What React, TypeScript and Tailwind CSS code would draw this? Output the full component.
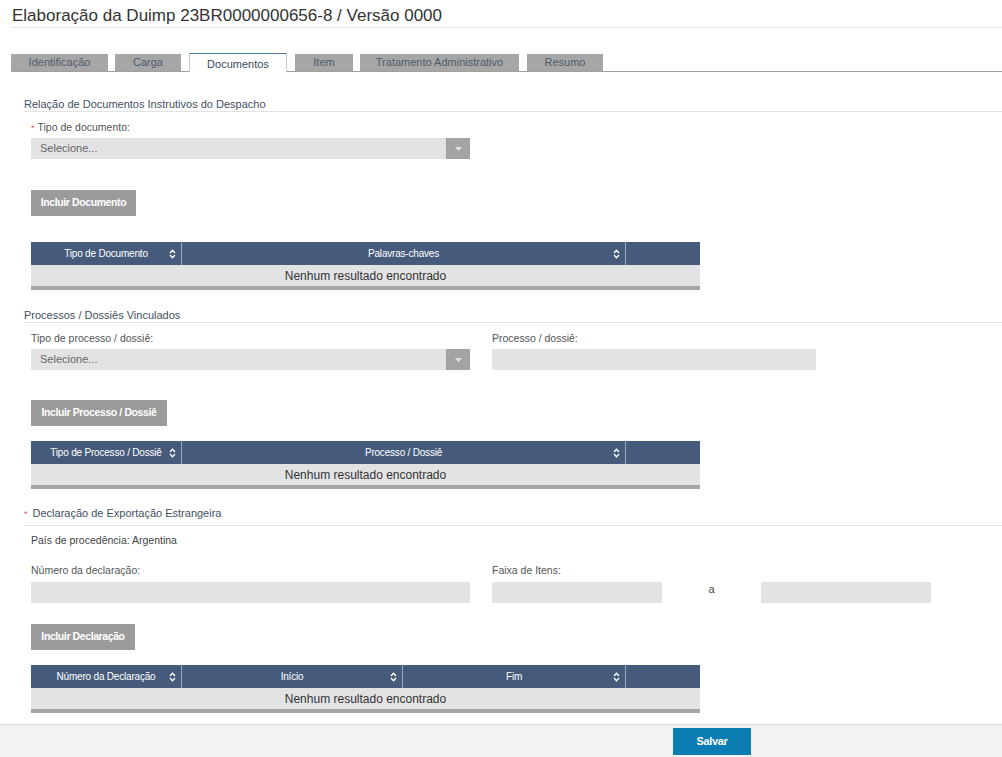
import React from 'react';

const SortIcon = () => (
  <svg width="7" height="10" viewBox="0 0 7 10" className="absolute right-[5px] top-[7px]">
    <path d="M1 4 L3.5 1.2 L6 4 M1 6 L3.5 8.8 L6 6" fill="none" stroke="#ffffff" strokeWidth="1.3" />
  </svg>
);

type Col = { label: string; width: number; sort: boolean };

const ResultTable = ({ cols }: { cols: Col[] }) => (
  <div className="ml-[31px] w-[669px]">
    <div className="flex h-[23px] bg-[#465b7b]">
      {cols.map((c, i) => (
        <div
          key={i}
          className={`relative flex items-center justify-center text-[10px] tracking-[-0.2px] text-white ${i > 0 ? 'border-l border-[#9aabc0]' : ''}`}
          style={{ width: c.width }}
        >
          {c.label}
          {c.sort && <SortIcon />}
        </div>
      ))}
    </div>
    <div className="flex h-[25px] items-center justify-center border-b-4 border-[#a6a6a6] bg-[#e2e3e4] text-[12px] text-[#333]">
      Nenhum resultado encontrado
    </div>
  </div>
);

const SectionTitle = ({ children, className }: { children: React.ReactNode; className: string }) => (
  <div className={`ml-[24px] border-b border-[#e3e3e3] text-[11px] leading-[14px] text-[#3f5062] ${className}`}>
    {children}
  </div>
);

const Label = ({ children, required }: { children: React.ReactNode; required?: boolean }) => (
  <div className="h-[13px] text-[10.5px] leading-[13px] text-[#555]">
    {required && <span className="mr-[3px] text-[9px] text-[#d9534f]">*</span>}
    {children}
  </div>
);

const Select = () => (
  <div className="flex h-[21px] w-[439px] bg-[#e2e3e4]">
    <div className="flex flex-1 items-center pl-[9px] text-[11px] text-[#666]">Selecione...</div>
    <div className="flex w-[24px] items-center justify-center bg-[#a3a3a3]">
      <svg width="7" height="4" viewBox="0 0 7 4">
        <path d="M0 0 L7 0 L3.5 4 Z" fill="#e4e4e4" />
      </svg>
    </div>
  </div>
);

const GrayButton = ({ children, width, className }: { children: React.ReactNode; width: string; className: string }) => (
  <div
    className={`ml-[31px] flex h-[26px] items-center justify-center bg-[#9b9b9b] text-[10.5px] font-bold tracking-[-0.4px] text-white ${width} ${className}`}
  >
    {children}
  </div>
);

const tabs = [
  { label: 'Identificação', w: 'w-[97px]', ml: 'ml-0' },
  { label: 'Carga', w: 'w-[66px]', ml: 'ml-[7px]' },
  { label: 'Documentos', w: 'w-[98px]', ml: 'ml-[8px]', active: true },
  { label: 'Item', w: 'w-[58px]', ml: 'ml-[8px]' },
  { label: 'Tratamento Administrativo', w: 'w-[159px]', ml: 'ml-[7px]' },
  { label: 'Resumo', w: 'w-[76px]', ml: 'ml-[8px]' },
];

export default function App() {
  return (
    <div className="flex h-[757px] w-full flex-col overflow-hidden bg-white font-['Liberation_Sans',Arial,sans-serif]">
      <div className="flex-1">
        {/* Title */}
        <div className="ml-[11px] border-b border-[#e5e5e5] pb-[1px] pl-[1px] pt-[6px] text-[17px] leading-[20px] text-[#333]">
          Elaboração da Duimp 23BR0000000656-8 / Versão 0000
        </div>

        {/* Tabs */}
        <div className="ml-[11px] mt-[25px] flex h-[19px] items-end border-b border-[#a0a0a0]">
          {tabs.map((t) =>
            t.active ? (
              <div
                key={t.label}
                className={`${t.w} ${t.ml} -mb-px h-[19px] border border-b-0 border-[#c3cad1] border-t-[#4f7898] bg-white pt-[3px] text-center text-[11px] leading-[14px] text-[#3b4b5b]`}
              >
                {t.label}
              </div>
            ) : (
              <div
                key={t.label}
                className={`${t.w} ${t.ml} h-[17px] bg-[#a6a6a6] text-center text-[11px] leading-[17px] text-[#4d5c6c]`}
              >
                {t.label}
              </div>
            )
          )}
        </div>

        {/* Documentos */}
        <SectionTitle className="mt-[25px]">Relação de Documentos Instrutivos do Despacho</SectionTitle>
        <div className="ml-[31px] mt-[9px]">
          <Label required>Tipo de documento:</Label>
          <div className="mt-[4px]">
            <Select />
          </div>
        </div>
        <GrayButton width="w-[105px]" className="mt-[31px]">Incluir Documento</GrayButton>
        <div className="mt-[26px]">
          <ResultTable
            cols={[
              { label: 'Tipo de Documento', width: 150, sort: true },
              { label: 'Palavras-chaves', width: 444, sort: true },
              { label: '', width: 75, sort: false },
            ]}
          />
        </div>

        {/* Processos */}
        <SectionTitle className="mt-[18px]">Processos / Dossiês Vinculados</SectionTitle>
        <div className="ml-[31px] mt-[9px] flex gap-[22px]">
          <div>
            <Label>Tipo de processo / dossiê:</Label>
            <div className="mt-[4px]">
              <Select />
            </div>
          </div>
          <div>
            <Label>Processo / dossiê:</Label>
            <div className="mt-[4px] h-[21px] w-[324px] bg-[#e2e3e4]" />
          </div>
        </div>
        <GrayButton width="w-[136px]" className="mt-[30px]">Incluir Processo / Dossiê</GrayButton>
        <div className="mt-[15px]">
          <ResultTable
            cols={[
              { label: 'Tipo de Processo / Dossiê', width: 150, sort: true },
              { label: 'Processo / Dossiê', width: 444, sort: true },
              { label: '', width: 75, sort: false },
            ]}
          />
        </div>

        {/* Declaração */}
        <SectionTitle className="mt-[17px] pb-[4px]">
          <span className="mr-[5px] text-[9px] text-[#d9534f]">*</span>
          Declaração de Exportação Estrangeira
        </SectionTitle>
        <div className="ml-[31px] mt-[8px] h-[13px] text-[10.5px] leading-[13px] text-[#444]">
          País de procedência: Argentina
        </div>
        <div className="ml-[31px] mt-[17px] flex gap-[22px]">
          <div>
            <Label>Número da declaração:</Label>
            <div className="mt-[5px] h-[21px] w-[439px] bg-[#e2e3e4]" />
          </div>
          <div>
            <Label>Faixa de Itens:</Label>
            <div className="mt-[5px] flex h-[21px] items-center">
              <div className="h-[21px] w-[170px] bg-[#e2e3e4]" />
              <div className="w-[99px] pb-[6px] text-center text-[11px] text-[#444]">a</div>
              <div className="h-[21px] w-[170px] bg-[#e2e3e4]" />
            </div>
          </div>
        </div>
        <GrayButton width="w-[104px]" className="mt-[21px]">Incluir Declaração</GrayButton>
        <div className="mt-[15px]">
          <ResultTable
            cols={[
              { label: 'Número da Declaração', width: 150, sort: true },
              { label: 'Início', width: 221, sort: true },
              { label: 'Fim', width: 223, sort: true },
              { label: '', width: 75, sort: false },
            ]}
          />
        </div>
      </div>

      {/* Footer */}
      <div className="h-[33px] border-t border-[#dcdcdc] bg-[#f2f2f2] pl-[673px] pt-[3px]">
        <div className="flex h-[27px] w-[78px] items-center justify-center bg-[#0b7db2] text-[11px] font-bold tracking-[-0.3px] text-white">
          Salvar
        </div>
      </div>
    </div>
  );
}
